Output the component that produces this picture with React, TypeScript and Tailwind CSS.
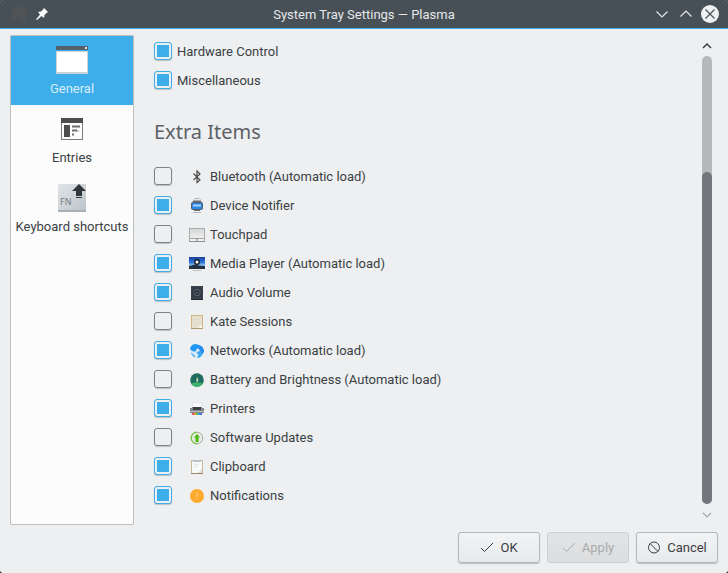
import React, { useState } from "react";

type IconProps = { children: React.ReactNode };

function SmallIcon({ children }: IconProps) {
  return (
    <svg viewBox="0 0 16 16" className="size-4 shrink-0" aria-hidden="true">
      {children}
    </svg>
  );
}

function LargeIcon({ children }: IconProps) {
  return (
    <svg viewBox="0 0 32 32" className="size-8" aria-hidden="true">
      {children}
    </svg>
  );
}

const BluetoothIcon = () => (
  <SmallIcon>
    <path d="M4.500 5.500 L11 12 L8 14.500 V3 L11 6 L4.500 12" fill="none" stroke="#4d4d4d" strokeWidth="1.200" />
  </SmallIcon>
);

const DeviceIcon = () => (
  <SmallIcon>
    <path d="M3.500 6 V5 Q4 1 8 1 Q12 1 12.500 5 V6 Z" fill="#a9abac" />
    <path d="M5 2.500 H11" stroke="#e8e8e8" />
    <path d="M4 4.500 H12" stroke="#6b6f72" />
    <rect x="2" y="5" width="12" height="8" rx="2" fill="#4f6072" />
    <rect x="3" y="6" width="10" height="6" rx="1" fill="#2b86e2" />
    <path d="M4 8.500 H12" stroke="#a5d2fb" strokeWidth="2" />
    <path d="M5 13.500 H11" stroke="#6b6d6f" />
    <path d="M4 15.500 H12" stroke="#b5b6b8" />
  </SmallIcon>
);

const TouchpadIcon = () => (
  <SmallIcon>
    <defs>
      <linearGradient id="pad" x1="0" y1="0" x2="0" y2="1">
        <stop offset="0" stopColor="#d4d5d6" />
        <stop offset="1" stopColor="#f6f6f6" />
      </linearGradient>
    </defs>
    <rect x="0.500" y="2.500" width="15" height="13" fill="url(#pad)" stroke="#a9aaab" />
    <path d="M1 12.500 H15" stroke="#a3a4a6" />
    <path d="M8 12 V15" stroke="#77797b" />
    <path d="M0 15.500 H16" stroke="#8d8f91" />
  </SmallIcon>
);

const MediaIcon = () => (
  <SmallIcon>
    <defs>
      <linearGradient id="sky" x1="0" y1="0" x2="0" y2="1">
        <stop offset="0" stopColor="#1b3f9c" />
        <stop offset="0.600" stopColor="#2f78d8" />
        <stop offset="1" stopColor="#a9d6f8" />
      </linearGradient>
    </defs>
    <rect x="0" y="2" width="16" height="9" fill="url(#sky)" />
    <path d="M0 11 L6 9.500 L10 10.500 L16 11 V14 H0 Z" fill="#243140" />
    <circle cx="8" cy="7" r="3" fill="#18212d" />
    <circle cx="8" cy="7" r="1.500" fill="#fff" />
    <path d="M4 15.500 H12" stroke="#c2c3c5" />
  </SmallIcon>
);

const AudioIcon = () => (
  <SmallIcon>
    <rect x="2" y="2" width="12" height="14" fill="#3a434d" />
    <path d="M2 15.500 H14" stroke="#20252b" />
    <circle cx="8" cy="8.500" r="5" fill="#2d353e" />
    <circle cx="8" cy="8.500" r="3.300" fill="none" stroke="#5d6976" />
    <circle cx="8" cy="8.500" r="1.500" fill="#434d58" />
  </SmallIcon>
);

const KateIcon = () => (
  <SmallIcon>
    <rect x="2.500" y="2.500" width="11" height="13" fill="#e6e0d1" stroke="#d3b584" />
    <path d="M4 6.500 H12 M5 9.500 H11" stroke="#dbd4c3" strokeDasharray="1 1" />
    <path d="M9 15 L13 11 V15 Z" fill="#faf7ee" />
    <path d="M2 15.500 H14" stroke="#b09a75" />
  </SmallIcon>
);

const NetworkIcon = () => (
  <SmallIcon>
    <circle cx="8" cy="9" r="6.500" fill="#dbe8f5" />
    <path d="M1 7 Q2 2.500 6 2 Q9 2 11 3.500 L10 6 L7.500 7 L6.500 9.500 Q3 10 1 7 Z" fill="#1e97f5" />
    <path d="M10.500 3 Q15 5 15 9.500 L13.500 12.500 L11 9 L9.500 6.500 Z" fill="#2389ec" />
    <path d="M7.500 10 L11 9 L13.500 12.500 Q11.500 16 8 16 L9.500 13 Z" fill="#38a8f2" />
    <path d="M1.500 10.500 Q3 14.500 6.500 15.700 L5 12.500 Z" fill="#5cb4f4" />
  </SmallIcon>
);

const BatteryIcon = () => (
  <SmallIcon>
    <circle cx="8" cy="9" r="6.800" fill="#216c60" />
    <path d="M2 12.500 Q5 11 8 11.500 Q11 11 14 12.500 Q12 15.800 8 15.800 Q4 15.800 2 12.500 Z" fill="#3bb36a" />
    <path d="M8.500 5.500 L7 9.500 H8 L7.500 12.500 L9.500 8.500 H8.500 Z" fill="#eef7c9" />
  </SmallIcon>
);

const PrinterIcon = () => (
  <SmallIcon>
    <rect x="3.500" y="2.500" width="9" height="6" fill="#f8f8f8" stroke="#d9dbdc" strokeWidth="0.500" />
    <path d="M1 8 H3 V7 H13 V8 H15 V13 H1 Z" fill="#84888c" />
    <rect x="4" y="7" width="8" height="3" fill="#3b4046" />
    <path d="M1 11.500 H15" stroke="#b9bbbd" />
    <path d="M3 14 H5" stroke="#d95362" strokeWidth="2" />
    <path d="M5 14 H7" stroke="#f29b2a" strokeWidth="2" />
    <path d="M7 14 H9" stroke="#5fc04a" strokeWidth="2" />
    <path d="M9 14 H11" stroke="#2fa3e8" strokeWidth="2" />
    <path d="M11 14 H13" stroke="#4b6be0" strokeWidth="2" />
  </SmallIcon>
);

const UpdateIcon = () => (
  <SmallIcon>
    <circle cx="8" cy="9" r="5.800" fill="#e6e9e4" stroke="#a8b0a4" />
    <path d="M8 3.200 A5.800 5.800 0 0 0 8 14.800" fill="none" stroke="#73c540" strokeWidth="1.200" />
    <path d="M8 5 L11 8.500 H9.500 V13 H6.500 V8.500 H5 Z" fill="#4db80f" />
  </SmallIcon>
);

const ClipboardIcon = () => (
  <SmallIcon>
    <rect x="2" y="2" width="12" height="14" fill="#cdb79c" />
    <rect x="3" y="3" width="10" height="12" fill="#f8f9f9" />
    <rect x="4" y="2" width="8" height="2" fill="#b4c3ca" />
    <path d="M5 6.500 H10 M5 8.500 H8" stroke="#e2e5e6" />
    <path d="M9 15 L13 11 V15 Z" fill="#dcdedf" />
    <path d="M2 15.500 H14" stroke="#9a8266" />
  </SmallIcon>
);

const NotificationIcon = () => (
  <SmallIcon>
    <circle cx="8" cy="9" r="7" fill="#fdab2e" />
    <path d="M8 5 V10 M8 11.500 V13" stroke="#fdc877" strokeWidth="1.200" />
  </SmallIcon>
);

const WindowIcon = () => (
  <LargeIcon>
    <rect x="0" y="2" width="32" height="4" fill="#566069" />
    <rect x="29" y="3" width="2" height="2" fill="#e3e5e7" />
    <rect x="0" y="7" width="32" height="23" fill="#c9d3d9" />
    <rect x="1" y="8" width="30" height="20" fill="#fff" />
  </LargeIcon>
);

const EntriesIcon = () => (
  <LargeIcon>
    <rect x="5.500" y="5.500" width="21" height="21" fill="#fcfcfc" stroke="#7b7b7b" />
    <rect x="5" y="5" width="22" height="5" fill="#4d4d4d" />
    <rect x="8" y="12" width="6" height="12" fill="#4d4d4d" />
    <path d="M16 13.500 H24 M16 17.500 H21 M16 21.500 H18" stroke="#6b6b6b" strokeWidth="2" />
    <path d="M21 18 H23" stroke="#999" />
  </LargeIcon>
);

const KeyboardIcon = () => (
  <LargeIcon>
    <defs>
      <linearGradient id="key" x1="0" y1="0" x2="1" y2="1">
        <stop offset="0" stopColor="#dfe4e7" />
        <stop offset="1" stopColor="#bcc4c9" />
      </linearGradient>
    </defs>
    <rect x="2" y="2" width="28" height="28" fill="url(#key)" />
    <rect x="2" y="28" width="28" height="2" fill="#a6b0b8" />
    <path d="M23 2 L30 9 H26 V14 H20 V9 H16 Z" fill="#31363b" />
    <path d="M20 15.500 H26" stroke="#31363b" />
    <text x="4" y="23" fontSize="9" fontFamily="Noto Sans, sans-serif" fill="#747d83">
      FN
    </text>
  </LargeIcon>
);

const CheckMark = () => (
  <svg viewBox="0 0 14 14" className="size-3.5" fill="none" stroke="currentColor" aria-hidden="true">
    <path d="M1 7 L4.500 10.500 L13 2" />
  </svg>
);

const Chevron = ({ up = false }: { up?: boolean }) => (
  <svg viewBox="0 0 14 14" className="size-3.5" fill="none" stroke="currentColor" strokeWidth="1.200" aria-hidden="true">
    <path d={up ? "M1.500 9.500 L7 4 L12.500 9.500" : "M1.500 4.500 L7 10 L12.500 4.500"} />
  </svg>
);

const categories = ["Hardware Control", "Miscellaneous"];

const extras = [
  { label: "Bluetooth (Automatic load)", Icon: BluetoothIcon, on: false },
  { label: "Device Notifier", Icon: DeviceIcon, on: true },
  { label: "Touchpad", Icon: TouchpadIcon, on: false },
  { label: "Media Player (Automatic load)", Icon: MediaIcon, on: true },
  { label: "Audio Volume", Icon: AudioIcon, on: true },
  { label: "Kate Sessions", Icon: KateIcon, on: false },
  { label: "Networks (Automatic load)", Icon: NetworkIcon, on: true },
  { label: "Battery and Brightness (Automatic load)", Icon: BatteryIcon, on: false },
  { label: "Printers", Icon: PrinterIcon, on: true },
  { label: "Software Updates", Icon: UpdateIcon, on: false },
  { label: "Clipboard", Icon: ClipboardIcon, on: true },
  { label: "Notifications", Icon: NotificationIcon, on: true },
];

const pages = [
  { label: "General", Icon: WindowIcon },
  { label: "Entries", Icon: EntriesIcon },
  { label: "Keyboard shortcuts", Icon: KeyboardIcon },
];

function CheckRow({ label, on, Icon }: { label: string; on: boolean; Icon?: () => React.ReactElement }) {
  return (
    <label className="flex h-5 items-center gap-[5px]">
      <input
        type="checkbox"
        defaultChecked={on}
        className="size-[18px] shrink-0 appearance-none rounded-[3px] border border-[#7f8184] p-[2px] shadow-[0_1px_1px_rgba(0,0,0,0.2)] checked:border-[#3daee9] checked:bg-[#3daee9] checked:bg-clip-content"
      />
      {Icon && (
        <span className="ml-3">
          <Icon />
        </span>
      )}
      <span className="pt-0.5">{label}</span>
    </label>
  );
}

const dialogButton =
  "flex h-[31px] w-[82px] items-center justify-center gap-1.5 rounded-[3px] border border-[#b4b6b8] bg-linear-to-b from-[#f2f3f4] to-[#e8e9ea] shadow-[0_1px_1px_rgba(0,0,0,0.2)] disabled:border-[#cdcfd0] disabled:from-[#e3e4e6] disabled:to-[#dcddde] disabled:text-[#a8abad] disabled:shadow-none";

export default function App() {
  const [page, setPage] = useState("General");

  return (
    <div className="min-h-screen bg-[#17191b] font-['Roboto','Noto_Sans',sans-serif] text-[13px] leading-5 text-[#3a3f44]">
      <div className="flex min-h-screen flex-col overflow-hidden rounded-[3px] bg-[#eeeff1]">
        <header className="grid h-[29px] grid-cols-[1fr_auto_1fr] items-center border-b border-[#3daee9] bg-[#475057] px-[9px] text-[#e5e7e8]">
          <div className="flex items-center gap-2.5 pl-[3px]">
            <svg viewBox="0 0 14 14" className="size-3.5" fill="#505356" aria-hidden="true">
              <path d="M0 0 H14 V14 H8 V9 H5 V14 H0 Z" />
            </svg>
            <button type="button" aria-label="Keep on all desktops">
              <svg viewBox="0 0 12 12" className="size-3" fill="#fcfcfc" aria-hidden="true">
                <path d="M8 0 L12 4 L10.500 5 L8.500 7 L8 10 L5.500 8 L1 12 L0 11.500 L4 6.500 L2 4 L5 3.500 L7 1.500 Z" />
              </svg>
            </button>
          </div>
          <h1 className="pt-0.5">System Tray Settings — Plasma</h1>
          <div className="flex items-center justify-end gap-2">
            <div className="flex items-center gap-2.5">
              <button type="button" aria-label="Minimize">
                <Chevron />
              </button>
              <button type="button" aria-label="Maximize">
                <Chevron up />
              </button>
            </div>
            <button type="button" aria-label="Close">
              <svg viewBox="0 0 18 18" className="size-[18px]" aria-hidden="true">
                <circle cx="9" cy="9" r="9" fill="#eff0f1" />
                <path d="M4.500 4.500 L13.500 13.500 M13.500 4.500 L4.500 13.500" stroke="#475057" strokeWidth="1.200" />
              </svg>
            </button>
          </div>
        </header>

        <div className="flex flex-1 flex-col gap-[7px] px-2.5 pt-1.5 pb-2.5">
          <div className="flex flex-1">
            <nav className="w-[124px] shrink-0 rounded-xs border border-[#bcbec0] bg-[#fcfcfc]">
              {pages.map(({ label, Icon }) => (
                <button
                  key={label}
                  type="button"
                  onClick={() => setPage(label)}
                  aria-pressed={page === label}
                  className="flex h-[69px] w-full flex-col items-center gap-[3px] pt-2 whitespace-nowrap aria-pressed:bg-[#3daee9] aria-pressed:text-[#d8edf9]"
                >
                  <Icon />
                  <span>{label}</span>
                </button>
              ))}
            </nav>

            <main className="flex flex-1 flex-col pt-1.5 pl-5">
              <div className="flex flex-col gap-[9px]">
                {categories.map((label) => (
                  <CheckRow key={label} label={label} on />
                ))}
              </div>
              <h2 className="flex h-[76px] items-center pt-2 font-['Noto_Sans',sans-serif] text-xl leading-7 text-[#5d6165]">
                Extra Items
              </h2>
              <div className="flex flex-col gap-[9px]">
                {extras.map((item) => (
                  <CheckRow key={item.label} {...item} />
                ))}
              </div>
            </main>

            <div className="mr-1 flex w-3.5 flex-col items-center pt-1">
              <button type="button" aria-label="Scroll up">
                <svg viewBox="0 0 10 10" className="mb-[7px] size-2.5" fill="none" stroke="#31363b" strokeWidth="1.400" aria-hidden="true">
                  <path d="M1 9 L5 5 L9 9" />
                </svg>
              </button>
              <div className="flex w-2.5 flex-1 flex-col justify-end rounded-full bg-[#b6b8bb]">
                <div className="h-[74%] rounded-full bg-[#73777b]" />
              </div>
              <button type="button" aria-label="Scroll down">
                <svg viewBox="0 0 10 10" className="mt-[7px] mb-1 size-2.5" fill="none" stroke="#a3a6a9" strokeWidth="1.200" aria-hidden="true">
                  <path d="M1 2 L5 6 L9 2" />
                </svg>
              </button>
            </div>
          </div>

          <footer className="flex justify-end gap-[7px]">
            <button type="button" className={dialogButton}>
              <CheckMark />
              OK
            </button>
            <button type="button" disabled className={dialogButton}>
              <CheckMark />
              Apply
            </button>
            <button type="button" className={dialogButton}>
              <svg viewBox="0 0 14 14" className="size-3.5" fill="none" stroke="currentColor" aria-hidden="true">
                <circle cx="7" cy="6.500" r="5.500" />
                <path d="M3 2.500 L11 10.500" />
              </svg>
              Cancel
            </button>
          </footer>
        </div>
      </div>
    </div>
  );
}
